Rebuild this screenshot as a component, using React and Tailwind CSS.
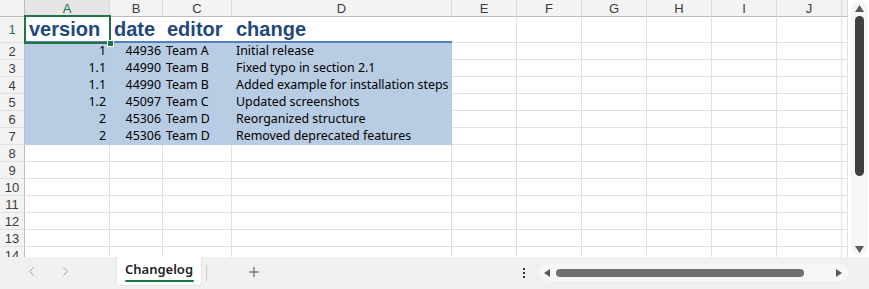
import React from 'react';
import { ChevronLeft, ChevronRight, Plus } from 'lucide-react';

const cols = ['A', 'B', 'C', 'D', 'E', 'F', 'G', 'H', 'I', 'J', ''];

const rows = [
  ['1', '44936', 'Team A', 'Initial release'],
  ['1.1', '44990', 'Team B', 'Fixed typo in section 2.1'],
  ['1.1', '44990', 'Team B', 'Added example for installation steps'],
  ['1.2', '45097', 'Team C', 'Updated screenshots'],
  ['2', '45306', 'Team D', 'Reorganized structure'],
  ['2', '45306', 'Team D', 'Removed deprecated features'],
];

const blanks = [8, 9, 10, 11, 12, 13, 14];

function RowNum({ n, active }) {
  return (
    <div className={`h-[17px] bg-[#f3f3f3] border-r border-r-[#bdbdbd] border-b border-b-[#e1e1e1] flex items-center justify-center text-[13px] leading-none ${active ? 'text-[#217346]' : 'text-[#3c3c3c]'}`}>
      {n}
    </div>
  );
}

function EmptyCells({ h = 'h-[17px]' }) {
  return (
    <>
      {[0, 1, 2, 3, 4, 5, 6].map((i) => (
        <div key={i} className={`${h} border-r border-b border-[#e1e1e1]`} />
      ))}
    </>
  );
}

function Tri({ dir }) {
  const pts = {
    up: '0,8 4.5,0 9,8',
    down: '0,0 4.5,8 9,0',
    left: '7,0 7,9 0,4.5',
    right: '0,0 0,9 7,4.5',
  }[dir];
  const vb = dir === 'up' || dir === 'down' ? '0 0 9 8' : '0 0 7 9';
  const size = dir === 'up' || dir === 'down' ? 'w-[9px] h-[7px]' : 'w-[6px] h-[8px]';
  return (
    <svg viewBox={vb} className={size} preserveAspectRatio="none">
      <polygon points={pts} fill="#5a5a5a" />
    </svg>
  );
}

export default function App() {
  return (
    <div className="w-[869px] h-[289px] flex flex-col bg-white overflow-hidden font-['Liberation_Sans',sans-serif]">
      <div className="flex h-[257px]">
        {/* Sheet grid */}
        <div className="relative w-[848px] h-[257px] overflow-hidden">
          <div className="grid grid-cols-[25px_85px_53px_69px_220px_65px_65px_65px_65px_65px_65px_6px]">
            {/* column headers */}
            <div className="h-[17px] bg-[#f3f3f3] border-r border-r-[#bdbdbd] border-b border-b-[#bdbdbd]" />
            {cols.map((c) => (
              <div
                key={c || 'k'}
                className={`h-[17px] border-b border-b-[#bdbdbd] border-r border-r-[#dadada] flex items-center justify-center text-[13px] leading-none ${c === 'A' ? 'bg-[#e6e6e6] text-[#217346]' : 'bg-[#f3f3f3] text-[#3c3c3c]'}`}
              >
                {c}
              </div>
            ))}

            {/* row 1 - headings */}
            <div className="h-[26px] bg-[#f3f3f3] border-r border-r-[#bdbdbd] border-b border-b-[#e1e1e1] flex items-center justify-center text-[13px] leading-none text-[#217346]">
              1
            </div>
            {['version', 'date', 'editor', 'change'].map((t) => (
              <div
                key={t}
                className="h-[26px] border-b-2 border-[#4f81bd] flex items-end pl-[4px] pb-[2px] text-[20px] leading-none font-bold text-[#1f497d]"
              >
                {t}
              </div>
            ))}
            <EmptyCells h="h-[26px]" />

            {/* data rows */}
            {rows.map((r, i) => (
              <React.Fragment key={i}>
                <RowNum n={i + 2} />
                <div className="h-[17px] bg-[#b8cce4] flex items-center justify-end pr-[4px] font-['Noto_Sans',sans-serif] text-[12.4px] leading-none text-black">
                  {r[0]}
                </div>
                <div className="h-[17px] bg-[#b8cce4] flex items-center justify-end pr-[2px] font-['Noto_Sans',sans-serif] text-[12.4px] leading-none text-black">
                  {r[1]}
                </div>
                <div className="h-[17px] bg-[#b8cce4] flex items-center pl-[3px] font-['Noto_Sans',sans-serif] text-[12.4px] leading-none text-black">
                  {r[2]}
                </div>
                <div className="h-[17px] bg-[#b8cce4] flex items-center pl-[4px] font-['Noto_Sans',sans-serif] text-[12.4px] leading-none text-black whitespace-nowrap">
                  {r[3]}
                </div>
                <EmptyCells />
              </React.Fragment>
            ))}

            {/* blank rows */}
            {blanks.map((n) => (
              <React.Fragment key={n}>
                <RowNum n={n} />
                {[0, 1, 2, 3].map((i) => (
                  <div key={i} className="h-[17px] border-r border-b border-[#e1e1e1]" />
                ))}
                <EmptyCells />
              </React.Fragment>
            ))}
          </div>

          {/* active cell selection */}
          <div className="absolute left-[24px] top-[15px] w-[87px] h-[29px] border-2 border-[#217346]">
            <div className="absolute -right-[5px] -bottom-[5px] w-[7px] h-[7px] bg-[#217346] border border-white" />
          </div>
        </div>

        {/* vertical scrollbar */}
        <div className="w-[21px] h-[257px] pl-[3px] pr-[1px] py-[2px]">
          <div className="h-full rounded-[8px] bg-[#f6f6f6] flex flex-col items-center pt-[3px] pb-[2px]">
            <Tri dir="up" />
            <div className="mt-[4px] w-[9px] h-[160px] rounded-full bg-[#404040]" />
            <div className="flex-1" />
            <Tri dir="down" />
          </div>
        </div>
      </div>

      {/* sheet tabs bar */}
      <div className="h-[32px] bg-[#f0f0f0] flex items-start">
        <div className="w-[116px] h-[28px] flex items-center pl-[24px] gap-[19px]">
          <ChevronLeft size={15} strokeWidth={1.5} color="#9a9a9a" />
          <ChevronRight size={15} strokeWidth={1.5} color="#9a9a9a" />
        </div>
        <div className="w-[86px] h-[29px] bg-white rounded-b-[5px] rounded-t-[3px] border border-[#e4e4e4] border-t-0 flex flex-col items-center pt-[4px]">
          <span className="font-['Noto_Sans',sans-serif] text-[13px] font-semibold leading-[17px] text-[#242424]">Changelog</span>
          <div className="mt-[2px] w-[69px] h-[2px] rounded-full bg-[#107c41]" />
        </div>
        <div className="ml-[4px] mt-[8px] w-px h-[16px] bg-[#c8c8c8]" />
        <div className="ml-[39px] mt-[7px]">
          <Plus size={16} strokeWidth={1.3} color="#333" />
        </div>
        <div className="ml-[261px] mt-[11px] flex flex-col gap-[2px]">
          <div className="w-[2px] h-[2px] bg-[#333]" />
          <div className="w-[2px] h-[2px] bg-[#333]" />
          <div className="w-[2px] h-[2px] bg-[#333]" />
        </div>
        <div className="ml-[14px] mt-[7px] w-[310px] h-[17px] rounded-full bg-[#f7f7f7] flex items-center pl-[5px] pr-[7px]">
          <Tri dir="left" />
          <div className="ml-[6px] w-[248px] h-[8px] rounded-full bg-[#707070]" />
          <div className="flex-1" />
          <Tri dir="right" />
        </div>
      </div>
    </div>
  );
}
